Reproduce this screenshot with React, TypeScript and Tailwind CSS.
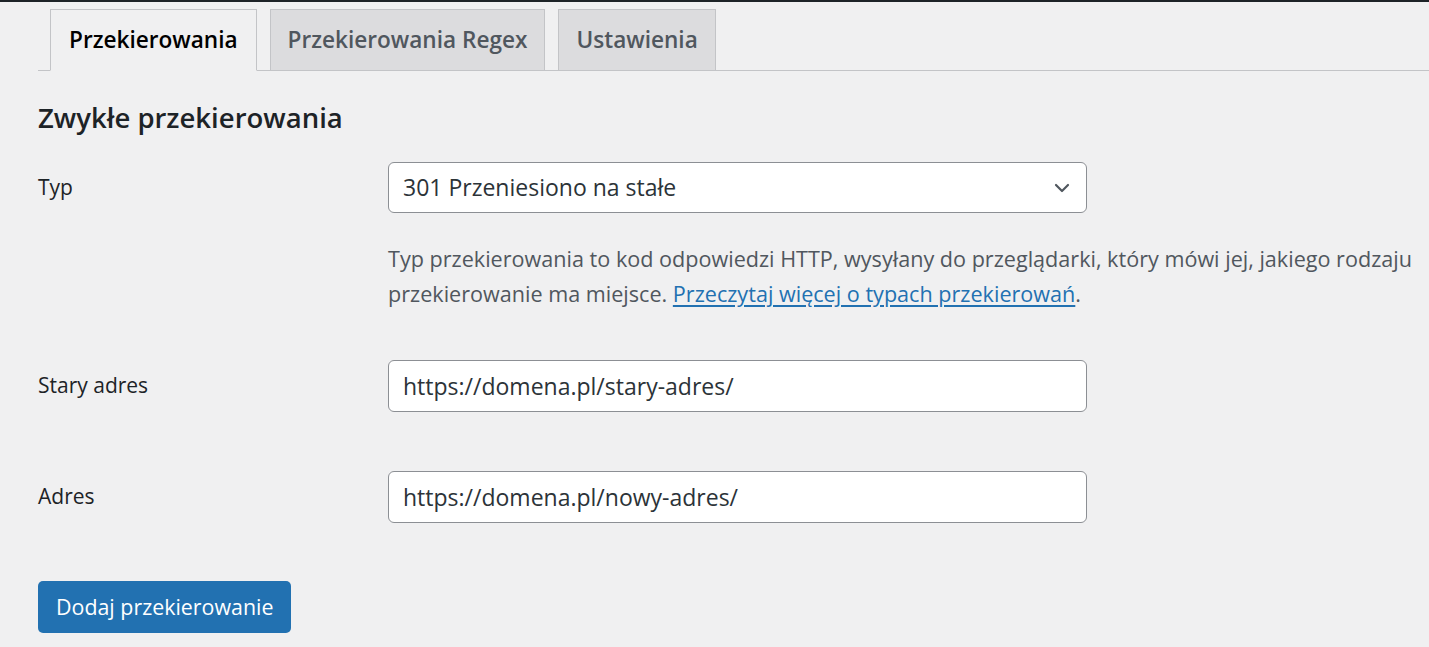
import { ChevronDown } from "lucide-react";

const tabs = [
  { label: "Przekierowania", active: true },
  { label: "Przekierowania Regex", active: false },
  { label: "Ustawienia", active: false },
];

function Field({ value }: { value: string }) {
  return (
    <div className="flex h-[52px] w-[699px] items-center rounded-[6px] border border-[#8c8f94] bg-white px-[14px] text-[23px] text-[#2c3338]">
      {value}
    </div>
  );
}

export default function App() {
  return (
    <div
      className="min-h-screen bg-[#f0f0f1] text-[#1d2327]"
      style={{ fontFamily: '"Segoe UI", "Open Sans", "Noto Sans", sans-serif' }}
    >
      <div className="h-[2px] bg-[#1d2327]" />

      <nav className="ml-[38px] mt-[7px] flex items-end gap-[13px] border-b border-[#c3c4c7] pl-[12px]">
        {tabs.map((t) => (
          <div
            key={t.label}
            className={
              t.active
                ? "-mb-px flex h-[62px] items-center border border-[#c3c4c7] border-b-[#f0f0f1] bg-[#f0f0f1] px-[18px] text-[22.6px] font-semibold text-black"
                : "flex h-[61px] items-center border border-b-0 border-[#c3c4c7] bg-[#dcdcde] px-[17px] text-[22.6px] font-semibold text-[#50575e]"
            }
          >
            {t.label}
          </div>
        ))}
      </nav>

      <div className="px-[38px]">
        <h2 className="mt-[29px] text-[27.5px] font-semibold leading-[36px] text-[#1d2327]">
          Zwykłe przekierowania
        </h2>

        <div className="mt-[26px] grid grid-cols-[350px_1fr]">
          <div className="flex h-[51px] items-center text-[21px]">Typ</div>
          <div>
            <div className="flex h-[51px] w-[699px] items-center justify-between rounded-[6px] border border-[#8c8f94] bg-white pl-[14px] pr-[12px] text-[23px] text-[#2c3338]">
              <span>301 Przeniesiono na stałe</span>
              <ChevronDown className="h-[24px] w-[24px] text-[#50575e]" strokeWidth={2.2} />
            </div>
            <p className="mt-[28px] whitespace-nowrap text-[21.6px] leading-[35px] text-[#50575e]">
              Typ przekierowania to kod odpowiedzi HTTP, wysyłany do przeglądarki, który mówi jej, jakiego rodzaju
              <br />
              przekierowanie ma miejsce.{" "}
              <a href="#" className="text-[#2271b1] underline underline-offset-[3px]">
                Przeczytaj więcej o typach przekierowań
              </a>
              .
            </p>
          </div>

          <div className="mt-[49px] flex h-[52px] items-center text-[21px]">Stary adres</div>
          <div className="mt-[49px]">
            <Field value="https://domena.pl/stary-adres/" />
          </div>

          <div className="mt-[59px] flex h-[52px] items-center text-[21px]">Adres</div>
          <div className="mt-[59px]">
            <Field value="https://domena.pl/nowy-adres/" />
          </div>
        </div>

        <button className="mt-[58px] h-[52px] rounded-[5px] bg-[#2271b1] px-[18px] text-[21.4px] text-white">
          Dodaj przekierowanie
        </button>
      </div>
    </div>
  );
}
